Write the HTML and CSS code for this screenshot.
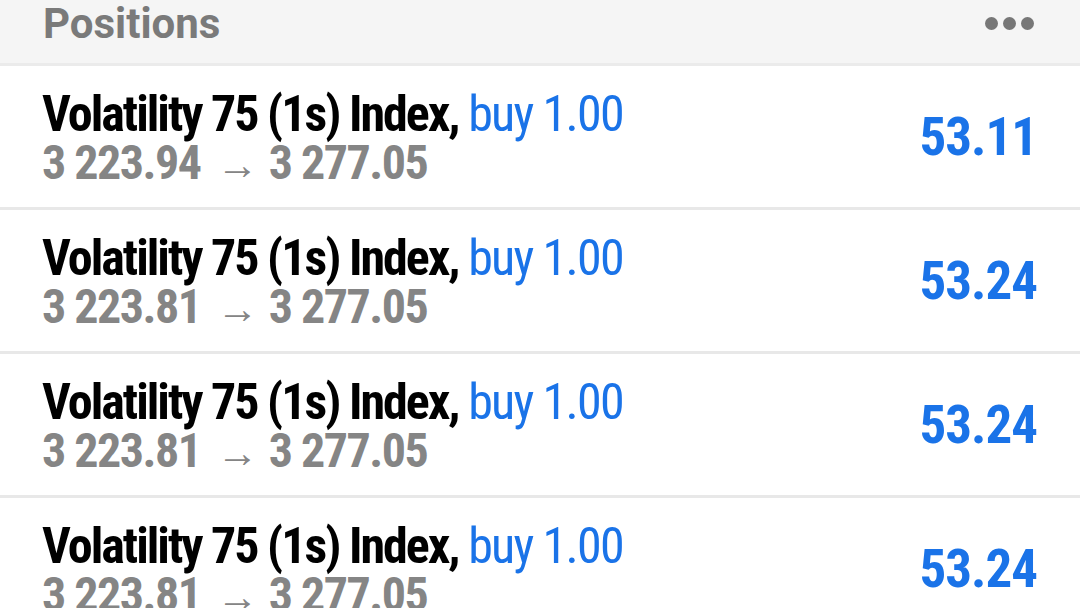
FILE: index.html
```html
<!DOCTYPE html>
<html lang="en">
  <head>
    <meta charset="UTF-8" />
    <meta name="viewport" content="width=device-width, initial-scale=1.0" />
    <title>Positions</title>
    <link rel="stylesheet" href="styles.css">
  </head>
  <body>
    <header class="bar">
      <h1 class="bar-title">Positions</h1>
      <div class="more">
        <span class="dot"></span>
        <span class="dot"></span>
        <span class="dot"></span>
      </div>
    </header>

    <ul class="positions">
      <li class="position">
        <div class="info">
          <div class="name">Volatility 75 (1s) Index, <span class="side">buy 1.00</span></div>
          <div class="prices">3 223.94 <span class="arrow">→</span> 3 277.05</div>
        </div>
        <div class="profit">53.11</div>
      </li>
      <li class="position">
        <div class="info">
          <div class="name">Volatility 75 (1s) Index, <span class="side">buy 1.00</span></div>
          <div class="prices">3 223.81 <span class="arrow">→</span> 3 277.05</div>
        </div>
        <div class="profit">53.24</div>
      </li>
      <li class="position">
        <div class="info">
          <div class="name">Volatility 75 (1s) Index, <span class="side">buy 1.00</span></div>
          <div class="prices">3 223.81 <span class="arrow">→</span> 3 277.05</div>
        </div>
        <div class="profit">53.24</div>
      </li>
      <li class="position">
        <div class="info">
          <div class="name">Volatility 75 (1s) Index, <span class="side">buy 1.00</span></div>
          <div class="prices">3 223.81 <span class="arrow">→</span> 3 277.05</div>
        </div>
        <div class="profit">53.24</div>
      </li>
    </ul>
  </body>
</html>
```

FILE: styles.css
```css
* {
  box-sizing: border-box;
}

html,
body {
  height: 100%;
}

body {
  margin: 0;
  background: #fff;
  font-family: Roboto, "Noto Sans", sans-serif;
  overflow: hidden;
}

/* Header */
.bar {
  display: flex;
  align-items: center;
  justify-content: space-between;
  height: 66px;
  padding: 0 46px 15px 43px;
  background: #f5f5f5;
  border-bottom: 3px solid #ebebeb;
}

.bar-title {
  margin: 0;
  font-size: 42px;
  font-weight: 700;
  color: #7a7a7a;
  line-height: 1;
}

.more {
  display: flex;
  gap: 5px;
  margin-top: -2px;
}

.dot {
  width: 13px;
  height: 13px;
  border-radius: 50%;
  background: #777;
}

/* List */
.positions {
  margin: 0;
  padding: 0;
  list-style: none;
}

.position {
  display: flex;
  align-items: center;
  justify-content: space-between;
  height: 144px;
  padding: 0 43px 0 42px;
  border-bottom: 3px solid #e8e8e8;
}

.info {
  padding-top: 4px;
  font-stretch: 75%;
  font-weight: 700;
  white-space: nowrap;
}

.name {
  font-size: 50px;
  line-height: 50px;
  letter-spacing: -2px;
  color: #000;
}

.side {
  font-weight: 400;
  letter-spacing: -1.7px;
  color: #1a73e8;
}

.prices {
  font-size: 48px;
  line-height: 48px;
  letter-spacing: -1.5px;
  color: #858585;
}

.arrow {
  display: inline-block;
  margin: 0 1px 0 6px;
  font-weight: 400;
  font-size: 42px;
  font-stretch: 100%;
  letter-spacing: 0;
}

.profit {
  font-size: 53px;
  font-weight: 700;
  font-stretch: 75%;
  letter-spacing: -1px;
  color: #1a73e8;
}
```
